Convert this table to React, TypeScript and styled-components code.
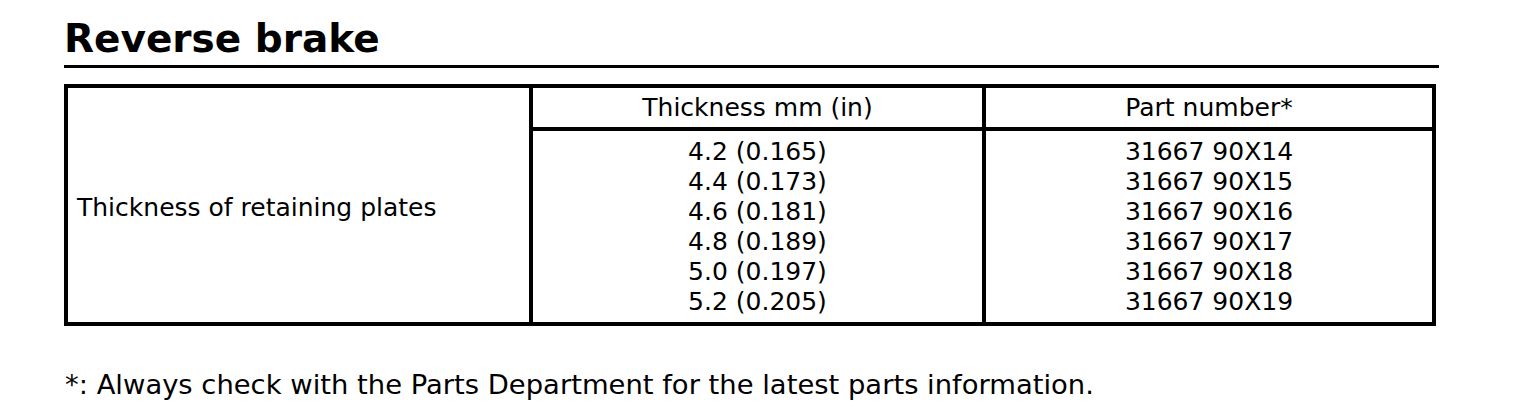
import React from "react";
import styled, { createGlobalStyle } from "styled-components";

const Global = createGlobalStyle`
  html, body { margin: 0; padding: 0; background: #fff; }
  body { font-family: "DejaVu Sans", Verdana, sans-serif; color: #000; }
`;

const Page = styled.div`
  width: 1536px;
  height: 414px;
  box-sizing: border-box;
  padding: 16px 0 0 64px;
  display: flex;
  flex-direction: column;
`;

const Title = styled.h1`
  margin: 0;
  width: 1375px;
  font-size: 39px;
  font-weight: bold;
  line-height: 46px;
  padding-bottom: 3px;
  border-bottom: 3px solid #000;
`;

const Grid = styled.div`
  margin-top: 16px;
  display: grid;
  grid-template-columns: 461px 449px 446px;
  grid-template-rows: 39px 191px;
  gap: 4px;
  padding: 4px;
  width: 1372px;
  box-sizing: border-box;
  background: #000;
`;

const Cell = styled.div<{ $rowSpan?: boolean; $align?: "left" | "center" }>`
  background: #fff;
  display: flex;
  flex-direction: column;
  justify-content: center;
  align-items: ${(p) => (p.$align === "left" ? "flex-start" : "center")};
  padding: ${(p) => (p.$align === "left" ? "6px 0 0 9px" : "0")};
  grid-row: ${(p) => (p.$rowSpan ? "1 / 3" : "auto")};
  font-size: 25px;
  line-height: 30px;
  white-space: nowrap;
`;

const Footer = styled.p`
  margin: 44px 0 0 1px;
  font-size: 27.4px;
  line-height: 30px;
  white-space: nowrap;
`;

const rows = [
  ["4.2 (0.165)", "31667 90X14"],
  ["4.4 (0.173)", "31667 90X15"],
  ["4.6 (0.181)", "31667 90X16"],
  ["4.8 (0.189)", "31667 90X17"],
  ["5.0 (0.197)", "31667 90X18"],
  ["5.2 (0.205)", "31667 90X19"],
];

export default function App() {
  return (
    <>
      <Global />
      <Page>
        <Title>Reverse brake</Title>
        <Grid>
          <Cell $rowSpan $align="left">Thickness of retaining plates</Cell>
          <Cell>Thickness mm (in)</Cell>
          <Cell>Part number*</Cell>
          <Cell>
            {rows.map((r) => (
              <span key={r[0]}>{r[0]}</span>
            ))}
          </Cell>
          <Cell>
            {rows.map((r) => (
              <span key={r[1]}>{r[1]}</span>
            ))}
          </Cell>
        </Grid>
        <Footer>*: Always check with the Parts Department for the latest parts information.</Footer>
      </Page>
    </>
  );
}
